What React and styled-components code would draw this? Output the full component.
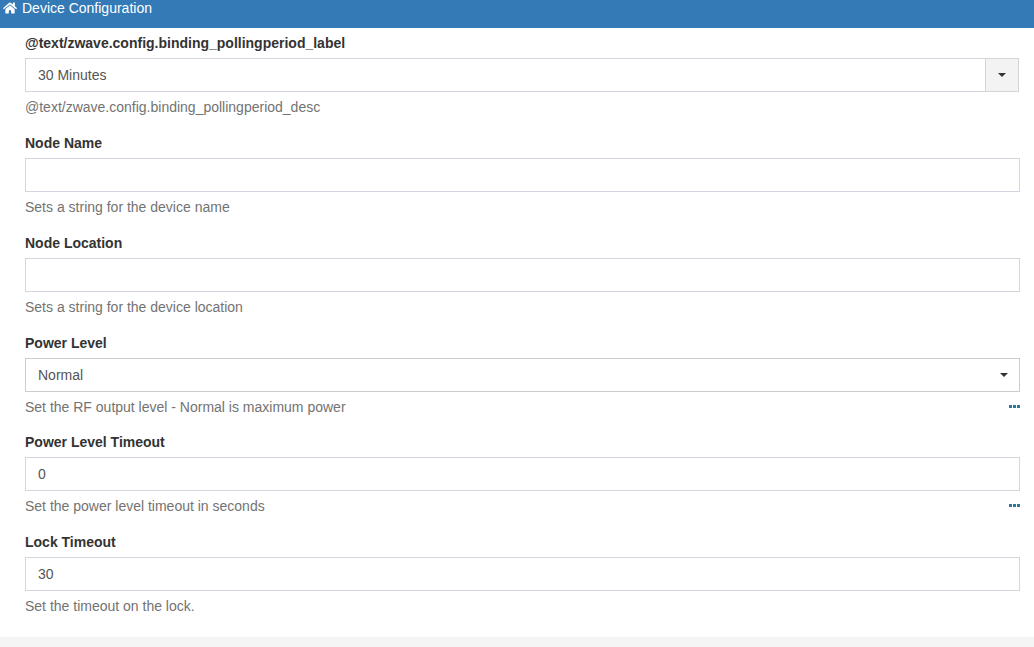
import React from 'react'
import styled, { createGlobalStyle } from 'styled-components'
import { FaHome } from 'react-icons/fa'

const GlobalStyle = createGlobalStyle`
  html, body {
    margin: 0;
    padding: 0;
    background: #fff;
    overflow: hidden;
  }
  body {
    font-family: "Liberation Sans", Arial, sans-serif;
    font-size: 14px;
    line-height: 20px;
    color: #333;
  }
`

export default function App() {
  return (
    <Page>
      <GlobalStyle />
      <PanelHeading>
        <FaHome size={14} />
        <span>Device Configuration</span>
      </PanelHeading>
      <PanelBody>
        <FormGroup>
          <Label>@text/zwave.config.binding_pollingperiod_label</Label>
          <InputGroup>
            <Control as="div" $joined>30 Minutes</Control>
            <CaretButton><Caret /></CaretButton>
          </InputGroup>
          <Help>@text/zwave.config.binding_pollingperiod_desc</Help>
        </FormGroup>

        <FormGroup>
          <Label>Node Name</Label>
          <Control />
          <Help>Sets a string for the device name</Help>
        </FormGroup>

        <FormGroup>
          <Label>Node Location</Label>
          <Control />
          <Help>Sets a string for the device location</Help>
        </FormGroup>

        <FormGroup $tight>
          <Label>Power Level</Label>
          <SelectBox>Normal<Caret /></SelectBox>
          <Help>Set the RF output level - Normal is maximum power</Help>
          <Dots><i /><i /><i /></Dots>
        </FormGroup>

        <FormGroup>
          <Label>Power Level Timeout</Label>
          <Control defaultValue="0" />
          <Help>Set the power level timeout in seconds</Help>
          <Dots><i /><i /><i /></Dots>
        </FormGroup>

        <FormGroup>
          <Label>Lock Timeout</Label>
          <Control defaultValue="30" />
          <Help>Set the timeout on the lock.</Help>
        </FormGroup>
      </PanelBody>
      <Footer />
    </Page>
  )
}

const Page = styled.div`
  display: flex;
  flex-direction: column;
  height: 647px;
  overflow: hidden;
`

const PanelHeading = styled.div`
  display: flex;
  align-items: flex-start;
  gap: 5px;
  height: 28px;
  padding-left: 3px;
  box-sizing: border-box;
  flex: none;
  background: #337ab7;
  color: #fff;
  line-height: 16px;

  svg {
    margin-top: 1px;
  }
`

const PanelBody = styled.div`
  flex: 1;
  padding: 5px 14px 0 25px;
`

const FormGroup = styled.div`
  position: relative;
  height: ${props => (props.$tight ? '99px' : '100px')};
`

const Label = styled.label`
  display: block;
  margin-bottom: 5px;
  font-weight: 700;
`

const Control = styled.input`
  display: block;
  width: 100%;
  height: 34px;
  padding: 6px 12px;
  box-sizing: border-box;
  flex: ${props => (props.$joined ? 1 : 'none')};
  border: 1px solid #d5d5e0;
  border-radius: 0;
  outline: none;
  background: #fff;
  color: #555;
  font: 14px/20px "Liberation Sans", Arial, sans-serif;
`

const InputGroup = styled.div`
  display: flex;
  height: 34px;
  margin-right: 1px;
`

const CaretButton = styled.div`
  display: flex;
  align-items: center;
  justify-content: center;
  flex: none;
  width: 34px;
  box-sizing: border-box;
  margin-left: -1px;
  border: 1px solid #d5d5d5;
  background: #f3f3f3;
`

const Caret = styled.span`
  width: 0;
  height: 0;
  border-top: 4px solid #333;
  border-left: 4px solid transparent;
  border-right: 4px solid transparent;
`

const SelectBox = styled.div`
  display: flex;
  align-items: center;
  justify-content: space-between;
  height: 34px;
  padding: 6px 11px 6px 12px;
  box-sizing: border-box;
  border: 1px solid #ccc;
  background: #fff;
  color: #555;
`

const Help = styled.p`
  margin: 5px 0 0;
  color: #737373;
`

const Dots = styled.div`
  position: absolute;
  right: 0;
  top: 72px;
  display: flex;
  gap: 1px;

  i {
    display: block;
    width: 3px;
    height: 3px;
    background: #2a7a9a;
  }
`

const Footer = styled.div`
  flex: none;
  height: 10px;
  background: #f5f5f5;
`
